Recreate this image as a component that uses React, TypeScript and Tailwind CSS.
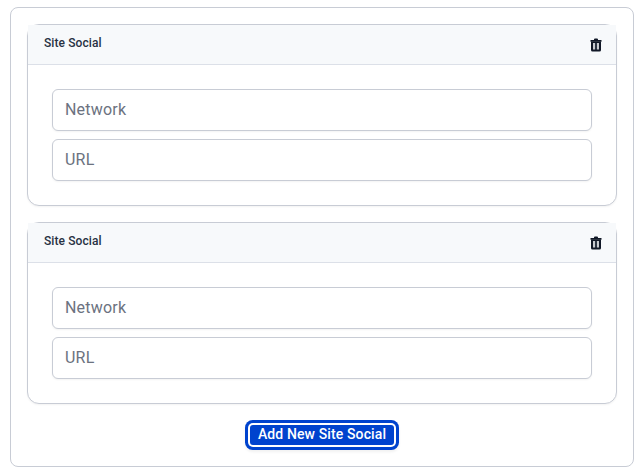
function TrashIcon() {
  return (
    <svg className="block" width="12" height="14" viewBox="0 0 12 14" fill="none" aria-hidden="true">
      <path d="M4 2V1.5Q4 .5 5 .5H7Q8 .5 8 1.5V2H11.5V3.7H.5V2Z" fill="#111827" />
      <path
        fillRule="evenodd"
        d="M1 3.5H11V12Q11 13.5 9.5 13.5H2.5Q1 13.5 1 12ZM3.2 5V11.4H4.8V5ZM7.2 5V11.4H8.8V5Z"
        fill="#111827"
      />
      <path d="M5.5 5H6.5V11.4H5.5Z" fill="#4b5563" />
    </svg>
  );
}

function Field({ label }: { label: string }) {
  return (
    <input
      type="text"
      placeholder={label}
      aria-label={label}
      className="block h-[42px] w-full rounded-md border border-[#c8ccd5] bg-white px-3 pb-[2px] text-base tracking-[0.2px] shadow-xs outline-none placeholder:text-[#6b7280]"
    />
  );
}

function SocialCard() {
  return (
    <section className="h-[182px] rounded-xl border border-[#c8ccd5] bg-white shadow-xs">
      <header className="flex h-10 items-start justify-between border-b border-[#dce0e8] bg-[#f7f9fb] pr-[14px] pl-4">
        <h2 className="pt-[10px] text-xs leading-4 font-medium tracking-[0.1px] text-[#283243]">Site Social</h2>
        <button type="button" aria-label="Remove" className="pt-[13px]">
          <TrashIcon />
        </button>
      </header>
      <div className="flex flex-col gap-2 p-6">
        <Field label="Network" />
        <Field label="URL" />
      </div>
    </section>
  );
}

export default function App() {
  return (
    <main className="h-[474px] bg-white pt-[7px] pr-1 pl-[10px] font-['Roboto',sans-serif]">
      <div className="flex h-[460px] flex-col gap-4 rounded-lg border border-[#c8ccd5] p-4">
        <SocialCard />
        <SocialCard />
        <div className="flex justify-center pt-[5px]">
          <button
            type="button"
            className="h-5 w-[144px] rounded-[3px] bg-[#0043ce] pb-[2px] text-sm leading-[18px] font-medium tracking-[0.12px] whitespace-nowrap text-white shadow-[0_0_0_2px_#ffffff,0_0_0_5px_#0043ce,0_2px_3px_5px_rgba(0,0,0,0.06)]"
          >
            Add New Site Social
          </button>
        </div>
      </div>
    </main>
  );
}
